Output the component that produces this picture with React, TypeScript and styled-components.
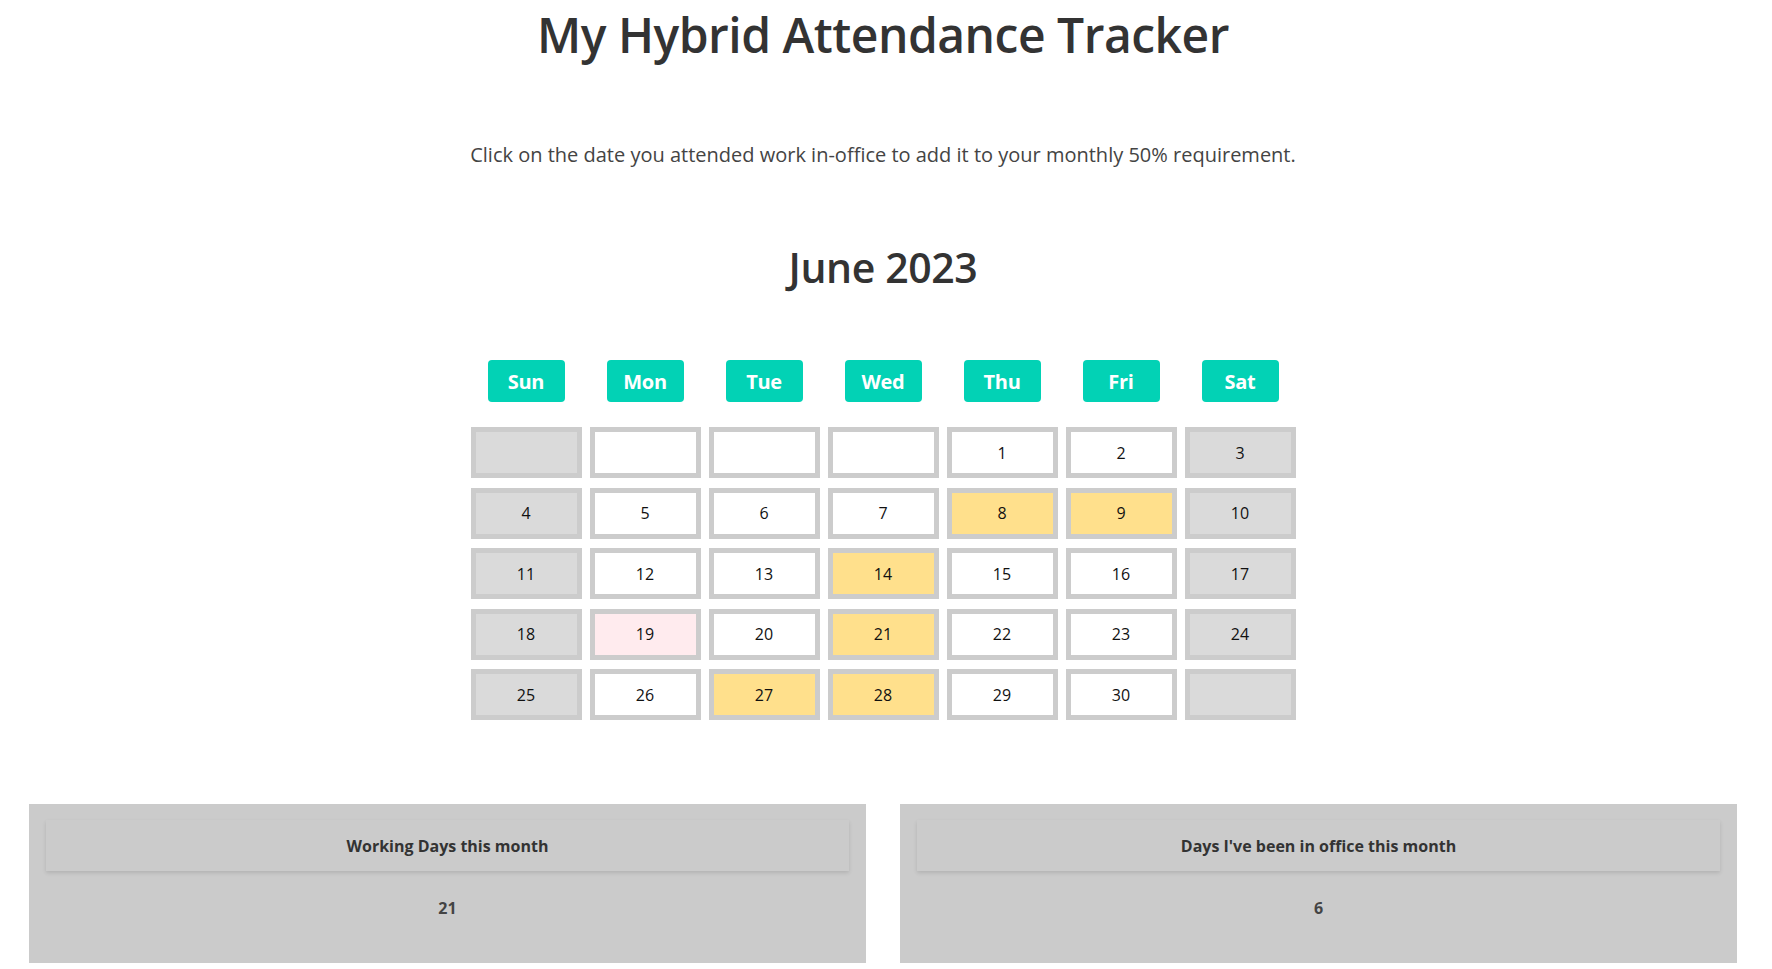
import React from "react";
import styled, { createGlobalStyle } from "styled-components";

const GlobalStyle = createGlobalStyle`
  html, body { margin: 0; padding: 0; background: #ffffff; }
  body { font-family: "Open Sans", "Noto Sans", Arial, sans-serif; color: #333333; }
  * { box-sizing: border-box; }
`;

const Page = styled.div`
  width: 1766px;
  display: flex;
  flex-direction: column;
  align-items: center;
`;

const Title = styled.h1`
  margin: 6px 0 0;
  font-size: 48px;
  line-height: 58px;
  font-weight: 600;
  color: #333333;
  letter-spacing: -0.5px;
`;

const Subtitle = styled.p`
  margin: 79px 0 0;
  font-size: 20px;
  line-height: 24px;
  color: #444444;
`;

const MonthTitle = styled.h2`
  margin: 75px 0 0;
  font-size: 41px;
  line-height: 50px;
  font-weight: 600;
  color: #333333;
  letter-spacing: -0.4px;
`;

const Calendar = styled.div`
  margin-top: 68px;
  display: grid;
  grid-template-columns: repeat(7, 111px);
  column-gap: 8px;
  row-gap: 9.5px;
`;

const DayHeader = styled.div`
  justify-self: center;
  width: 77px;
  height: 42px;
  margin-bottom: 15.5px;
  border-radius: 4px;
  background: #02d2b5;
  color: #ffffff;
  font-weight: 700;
  font-size: 20px;
  letter-spacing: -0.3px;
  display: flex;
  align-items: center;
  justify-content: center;
`;

type Kind = "weekday" | "weekend" | "office" | "holiday";

const cellBg: Record<Kind, string> = {
  weekday: "#ffffff",
  weekend: "#dadada",
  office: "#ffe08c",
  holiday: "#ffebee",
};

const Cell = styled.div<{ $kind: Kind }>`
  height: 51px;
  border: 5px solid #cccccc;
  background: ${(p) => cellBg[p.$kind]};
  color: #111111;
  font-size: 16px;
  display: flex;
  align-items: center;
  justify-content: center;
  cursor: pointer;
`;

const Cards = styled.div`
  margin-top: 84px;
  display: grid;
  grid-template-columns: 837px 837px;
  column-gap: 34px;
`;

const Card = styled.div`
  background: #cbcbcb;
  padding: 16px 17px 43px;
  display: flex;
  flex-direction: column;
  align-items: stretch;
`;

const CardHeader = styled.div`
  height: 51px;
  background: #cbcbcb;
  box-shadow: 0 2px 4px rgba(0, 0, 0, 0.12);
  display: flex;
  align-items: center;
  justify-content: center;
  font-weight: 700;
  font-size: 16px;
  color: #333333;
`;

const CardValue = styled.div`
  margin-top: 25px;
  line-height: 24px;
  text-align: center;
  font-weight: 700;
  font-size: 16px;
  color: #444444;
`;

const days = ["Sun", "Mon", "Tue", "Wed", "Thu", "Fri", "Sat"];
const office = new Set([8, 9, 14, 21, 27, 28]);
const holiday = new Set([19]);

function kindFor(col: number, day: number | null): Kind {
  if (col === 0 || col === 6) return "weekend";
  if (day !== null && office.has(day)) return "office";
  if (day !== null && holiday.has(day)) return "holiday";
  return "weekday";
}

export default function App() {
  const cells: { day: number | null; col: number }[] = [];
  const startOffset = 4;
  for (let i = 0; i < 35; i++) {
    const d = i - startOffset + 1;
    cells.push({ day: d >= 1 && d <= 30 ? d : null, col: i % 7 });
  }
  return (
    <>
      <GlobalStyle />
      <Page>
        <Title>My Hybrid Attendance Tracker</Title>
        <Subtitle>
          Click on the date you attended work in-office to add it to your monthly 50% requirement.
        </Subtitle>
        <MonthTitle>June 2023</MonthTitle>
        <Calendar>
          {days.map((d) => (
            <DayHeader key={d}>{d}</DayHeader>
          ))}
          {cells.map((c, i) => (
            <Cell key={i} $kind={kindFor(c.col, c.day)}>
              {c.day ?? ""}
            </Cell>
          ))}
        </Calendar>
        <Cards>
          <Card>
            <CardHeader>Working Days this month</CardHeader>
            <CardValue>21</CardValue>
          </Card>
          <Card>
            <CardHeader>Days I've been in office this month</CardHeader>
            <CardValue>6</CardValue>
          </Card>
        </Cards>
      </Page>
    </>
  );
}
